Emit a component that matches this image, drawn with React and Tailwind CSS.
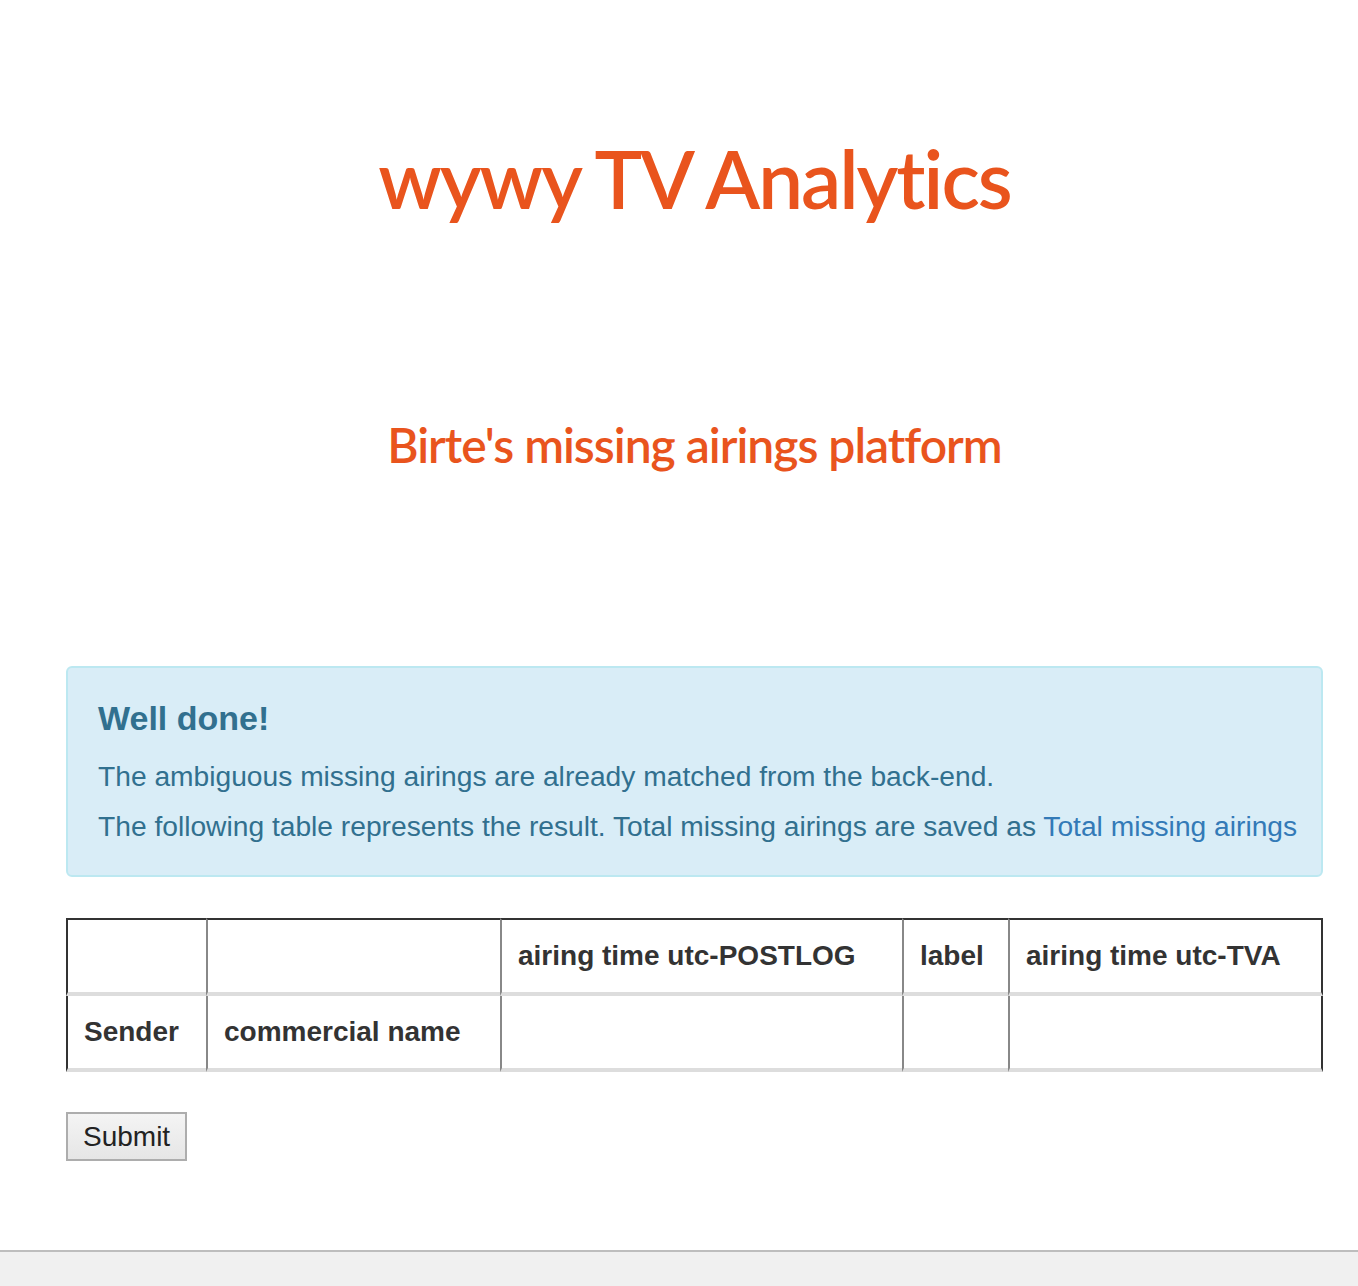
import React from 'react';

const columns = [
  { head: '', body: 'Sender', width: 'w-[140px]' },
  { head: '', body: 'commercial name', width: 'w-[294px]' },
  { head: 'airing time utc-POSTLOG', body: '', width: 'w-[402px]' },
  { head: 'label', body: '', width: 'w-[106px]' },
  { head: 'airing time utc-TVA', body: '', width: 'w-[315px]' },
];

const App = () => {
  return (
    <div className="min-h-[1286px] bg-white flex flex-col font-['Liberation_Sans',Arial,sans-serif]">
      <div className="flex-1 pl-[66px] pr-[35px] pb-[89px]">
        <h1 className="pt-[130px] text-center font-['Lato',sans-serif] font-semibold text-[80px] leading-[96px] text-[#e9541d] tracking-[-2px]">
          wywy TV Analytics
        </h1>
        <h2 className="mt-[190px] text-center font-['Lato',sans-serif] font-semibold text-[48px] leading-[58px] text-[#e9541d] tracking-[-1px]">
          Birte's missing airings platform
        </h2>

        <div className="mt-[192px] rounded-md border-2 border-[#bce8f1] bg-[#d9edf7] px-[30px] pt-[30px] pb-[29px] text-[#31708f]">
          <h4 className="text-[34px] leading-[40px] font-bold mb-[18px]">Well done!</h4>
          <p className="text-[28.2px] leading-[40px] mb-[10px] whitespace-nowrap">
            The ambiguous missing airings are already matched from the back-end.
          </p>
          <p className="text-[28.2px] leading-[40px] whitespace-nowrap">
            The following table represents the result. Total missing airings are saved as{' '}
            <a href="#" className="text-[#337ab7]">Total missing airings</a>
          </p>
        </div>

        <table className="mt-[41px] w-full border-separate border-spacing-0 text-[28px] leading-8 font-bold text-[#333]">
          <thead>
            <tr>
              {columns.map((c, i) => (
                <th
                  key={i}
                  className={`${c.width} h-[78px] px-4 text-left align-middle border-t-2 border-t-[#333] border-b-4 border-b-[#ddd] border-l-2 ${i === 0 ? 'border-l-[#333]' : 'border-l-[#888]'} ${i === columns.length - 1 ? 'border-r-2 border-r-[#333]' : ''}`}
                >
                  {c.head}
                </th>
              ))}
            </tr>
          </thead>
          <tbody>
            <tr>
              {columns.map((c, i) => (
                <td
                  key={i}
                  className={`h-[76px] px-4 text-left align-middle border-b-4 border-b-[#ddd] border-l-2 ${i === 0 ? 'border-l-[#333]' : 'border-l-[#888]'} ${i === columns.length - 1 ? 'border-r-2 border-r-[#333]' : ''}`}
                >
                  {c.body}
                </td>
              ))}
            </tr>
          </tbody>
        </table>

        <button className="mt-[40px] h-[49px] px-[15px] border-2 border-[#adadad] bg-gradient-to-b from-[#f4f4f4] to-[#e6e6e6] text-[28px] leading-8 text-[#222]">
          Submit
        </button>
      </div>

      <div className="h-[36px] border-t-2 border-[#bdbdbd] bg-[#f0f0f0]"></div>
    </div>
  );
};

export default App;
